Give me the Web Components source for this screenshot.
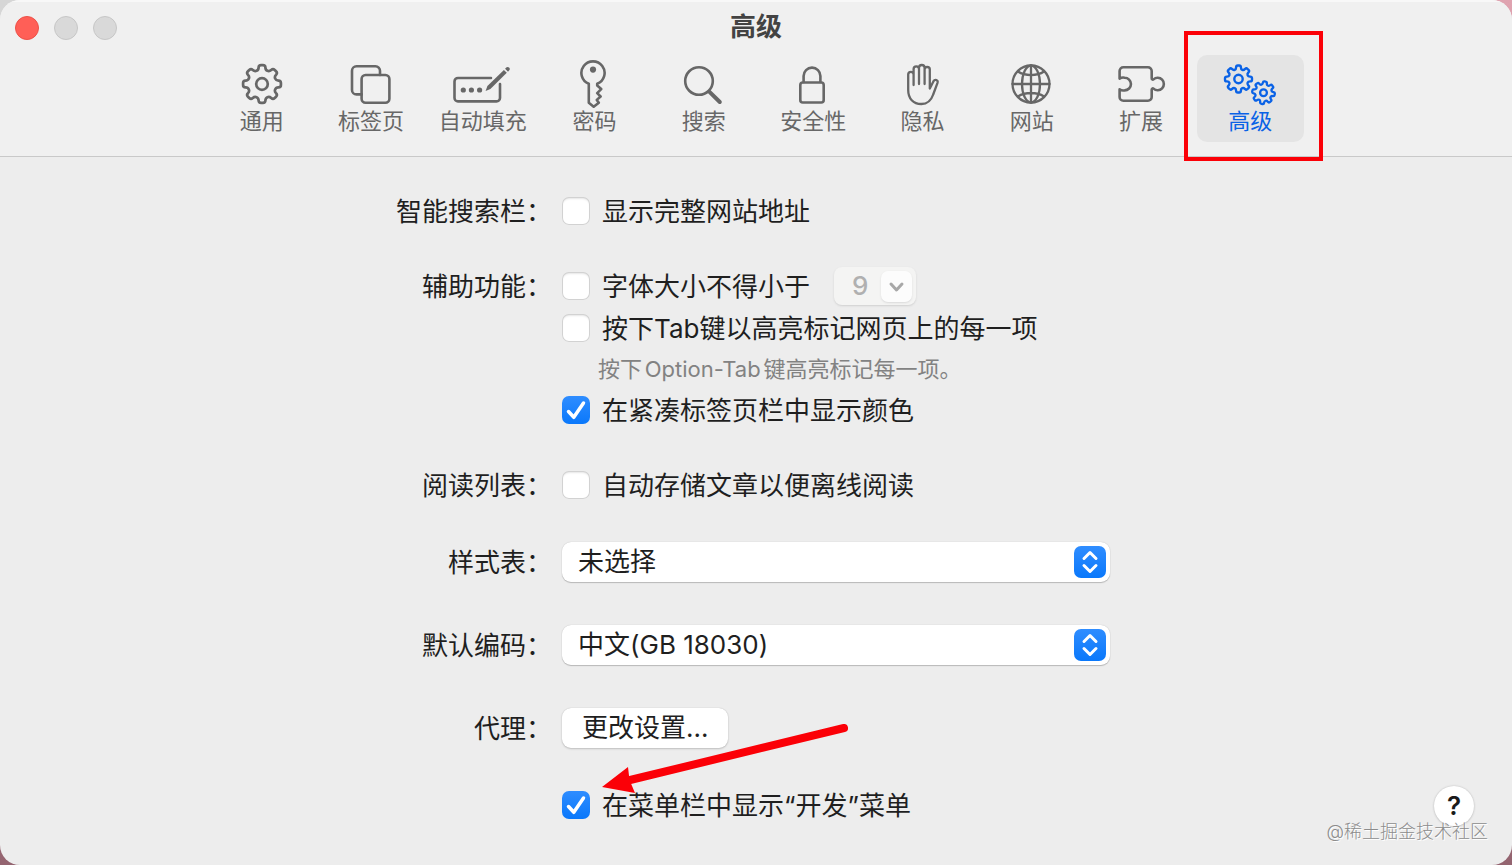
<!DOCTYPE html>
<html lang="zh-CN">
<head>
<meta charset="utf-8">
<title>高级</title>
<style>
  html { height: 100%; }
  body {
    margin: 0;
    min-height: 100vh;
    display: flex;
    background: linear-gradient(100deg, #d6d6d6 0 50%, transparent 50%) top / 100% 50% no-repeat,
                linear-gradient(#dfa3b0, #946470);
    font-family: Inter, "Noto Sans CJK SC", sans-serif;
    font-size: 26px;
    line-height: 40px;
    color: #1f1f1f;
  }
</style>
</head>
<body>
<prefs-window></prefs-window>

<script>
/* Closed path through the points, each corner rounded by r. */
function roundedPath(pts, r) {
  let d = '';
  pts.forEach((p, i) => {
    const a = pts[(i + pts.length - 1) % pts.length], b = pts[(i + 1) % pts.length];
    const toward = q => {
      const l = Math.hypot(q[0] - p[0], q[1] - p[1]), k = Math.min(r, l / 2) / l;
      return [p[0] + (q[0] - p[0]) * k, p[1] + (q[1] - p[1]) * k].map(n => n.toFixed(2)).join(' ');
    };
    d += `${i ? 'L' : 'M'}${toward(a)}Q${p[0].toFixed(2)} ${p[1].toFixed(2)} ${toward(b)}`;
  });
  return d + 'Z';
}

/* Eight-toothed gear with a round hole. */
function gear(cx, cy, outer, root, hole, width, turn = 0) {
  const pts = [];
  for (let i = 0; i < 8; i++) {
    for (const [off, rad] of [[-14, root], [-10, outer], [10, outer], [14, root]]) {
      const t = (i * 45 + off + turn - 90) * Math.PI / 180;
      pts.push([cx + rad * Math.cos(t), cy + rad * Math.sin(t)]);
    }
  }
  return `<g stroke-width="${width}"><path d="${roundedPath(pts, outer / 8)}"/><circle cx="${cx}" cy="${cy}" r="${hole}"/></g>`;
}

const ICONS = {
  general: gear(32, 24, 19.2, 14.4, 5.8, 2.7),
  tabs: '<rect x="22.6" y="15" width="27.8" height="27.8" rx="4"/><path d="M22.6 34.4H17.5a4.5 4.5 0 0 1-4.5-4.5V10.8a4.5 4.5 0 0 1 4.5-4.5H36.5a4.5 4.5 0 0 1 4.5 4.5V15"/>',
  autofill: '<g transform="translate(-2 0)"><path d="M42 18H9a3.5 3.5 0 0 0-3.5 3.5v16.4A3.5 3.5 0 0 0 9 41.4h38.5a3.5 3.5 0 0 0 3.5-3.5V24"/><g fill="currentColor" stroke="none"><circle cx="14.3" cy="30" r="2.6"/><circle cx="22.4" cy="30" r="2.6"/><circle cx="30.6" cy="30" r="2.6"/><path d="M36.6 31l1.8-5L54.9 9.9l2.9 2.9L41.4 29z"/><path d="M56.1 8.8l1.1-1.2a2 2 0 0 1 2.9 2.9L59 11.7z"/></g></g>',
  key: '<g transform="translate(-1 0)"><path d="M26.8 23.8a11.6 11.6 0 1 1 8.4 0v1.8l4 3.5-4 4 3.4 3.4-3.8 3.4 2 2.8-5.1 4-4.9-4z"/><circle cx="31" cy="9.6" r="3.1" fill="currentColor" stroke="none"/></g>',
  search: '<circle cx="27" cy="21" r="13.8"/><path d="M37.5 31.8L47.8 42" stroke-width="4"/>',
  lock: '<rect x="19.3" y="22.5" width="23.4" height="20" rx="2.5"/><path d="M22.6 22V16a8.4 8.4 0 0 1 16.8 0v6"/>',
  hand: '<path stroke-width="2.3" d="M23.6 25V14.5a2.7 2.7 0 0 0-5.4 0V30c0 8.500 5 14 13.200 14 6 0 9.600-3 11.800-9.500L47.500 22.800c.9-3-2.600-4-4-1.600L39.800 28.500V9.600a2.600 2.600 0 0 0-5.200 0V24M23.600 14.500V9a2.700 2.700 0 0 1 5.400 0V24M29 9V7.800a2.800 2.800 0 0 1 5.600 0V12"/>',
  globe: '<g stroke-width="2.3" transform="translate(-1 0)"><circle cx="32" cy="24" r="18.500"/><path d="M13.500 24h37M32 5.500v37M19 11.500c7 4.700 19 4.700 26 0M19 36.500c7-4.700 19-4.700 26 0"/><ellipse cx="32" cy="24" rx="9" ry="18.500"/></g>',
  puzzle: '<path d="M10.600 18.600V11a3.800 3.800 0 0 1 3.800-3.800h24.500a3.800 3.800 0 0 1 3.800 3.800v7.300c0 1.200.9 1.600 1.800 1.100a6.200 6.200 0 1 1 0 9.200c-.9-.5-1.800-.1-1.800 1.100V37a3.800 3.800 0 0 1-3.800 3.800H14.400a3.800 3.800 0 0 1-3.800-3.800v-7.600c1.600 1.100 3.500 1.300 5 1a6.300 6.300 0 1 0 0-12.700c-1.500-.3-3.400-.1-5 .9z"/>',
  advanced: gear(20.5, 19, 13.7, 10, 4.2, 2.4) + gear(45.5, 32.700, 11.500, 8.400, 3.400, 2.300, 8)
};

class PrefsTab extends HTMLElement {
  connectedCallback() {
    const selected = this.hasAttribute('selected');
    this.attachShadow({ mode: 'open' }).innerHTML = `
      <style>
        :host { display: block; flex: 1 1 107px; position: relative; }
        :host([wide]) { flex-basis: 112px; }
        button {
          width: 100%; height: 87px; padding: 5px 0 8px; border: 0; border-radius: 10px;
          background: none; color: #676767; font: inherit; font-size: 22px; line-height: 26px;
          display: flex; flex-direction: column; align-items: center;
        }
        button[aria-selected="true"] { background: #e4e4e4; color: #0a62e6; }
        svg { width: 64px; height: 48px; fill: none; stroke: currentColor; stroke-width: 2.6; stroke-linecap: round; stroke-linejoin: round; }
        span { white-space: nowrap; }
      </style>
      <button type="button" role="tab" aria-selected="${selected}">
        <svg viewBox="0 0 64 48" aria-hidden="true">${ICONS[this.getAttribute('icon')]}</svg>
        <span><slot></slot></span>
      </button>
      <slot name="mark"></slot>`;
  }
}

class MarkFrame extends HTMLElement {
  connectedCallback() {
    this.attachShadow({ mode: 'open' }).innerHTML = `
      <style>
        :host { position: absolute; inset: -24px -19px -19px -13px; border: 4px solid #fb0007; pointer-events: none; z-index: 2; }
      </style>`;
  }
}

class MarkArrow extends HTMLElement {
  connectedCallback() {
    this.attachShadow({ mode: 'open' }).innerHTML = `
      <style>
        :host { position: absolute; left: 40px; top: -65px; pointer-events: none; }
        svg { display: block; width: 248px; height: 76px; }
      </style>
      <svg viewBox="0 0 248 76" aria-hidden="true">
        <path d="M242 8L24 61" stroke="#fb0007" stroke-width="8" stroke-linecap="round"/>
        <path d="M0 67L26 47L27.500 60L33 73z" fill="#fb0007"/>
      </svg>`;
  }
}

/* Row frame: right-aligned caption beside a column of controls. */
const ROW_STYLE = `
  :host { display: grid; grid-template-columns: 156px minmax(0, 548px); column-gap: 10px; justify-content: center; padding-right: 6px; }
  .caption { text-align: right; white-space: nowrap; height: 40px; line-height: 42px; }`;

class PrefsGroup extends HTMLElement {
  connectedCallback() {
    this.attachShadow({ mode: 'open' }).innerHTML = `
      <style>
        ${ROW_STYLE}
        .items { display: flex; flex-direction: column; gap: 2px; align-items: flex-start; position: relative; }
      </style>
      <div class="caption" id="cap">${this.getAttribute('caption') || ''}</div>
      <div class="items" role="group" aria-labelledby="cap"><slot></slot></div>`;
  }
}

class PrefsCheck extends HTMLElement {
  connectedCallback() {
    this.attachShadow({ mode: 'open' }).innerHTML = `
      <style>
        :host { display: flex; align-items: center; height: 40px; }
        label { display: flex; align-items: center; gap: 12px; white-space: nowrap; }
        .box { display: grid; }
        .box > * { grid-area: 1 / 1; }
        .text { padding-top: 2px; }
        input {
          appearance: none; margin: 0; width: 28px; height: 28px; border-radius: 7px; background: #fff;
          box-shadow: inset 0 0 0 1px #d2d2d2, inset 0 2px 2px #e6e6e6;
        }
        input:checked { background: linear-gradient(#2f8dff, #0a78fb); box-shadow: none; }
        svg { width: 28px; height: 28px; fill: none; stroke: none; stroke-width: 3.500; stroke-linecap: round; stroke-linejoin: round; pointer-events: none; }
        input:checked + svg { stroke: #fff; }
      </style>
      <label>
        <span class="box">
          <input type="checkbox" ${this.hasAttribute('checked') ? 'checked' : ''}>
          <svg viewBox="0 0 28 28" aria-hidden="true"><path d="M6.500 15.500L11.800 21.300L21.500 7"/></svg>
        </span>
        <span class="text"><slot></slot></span>
      </label>
      <slot name="after"></slot>`;
  }
}

class PrefsSize extends HTMLElement {
  connectedCallback() {
    this.attachShadow({ mode: 'open' }).innerHTML = `
      <style>
        :host { display: grid; margin-left: 24px; width: 82px; height: 38px; }
        select, svg { grid-area: 1 / 1; }
        select {
          appearance: none; box-sizing: border-box; height: 38px; border: 0; margin: 0; padding: 0 0 0 18px; border-radius: 8px;
          font: inherit; line-height: 38px; font-weight: 500;
          background: #f4f4f3; color: #b0b0b0; opacity: 1; box-shadow: 0 1px 2px #d0d0d0;
        }
        svg {
          justify-self: end; align-self: center; width: 31px; height: 31px; margin-right: 4px; border-radius: 7px;
          background: #fcfcfc; box-shadow: 0 1px 2px #dadada; fill: none; stroke: #a8a8a8; stroke-width: 3;
          stroke-linecap: round; stroke-linejoin: round; pointer-events: none;
        }
      </style>
      <select disabled aria-label="字体大小"><option>9</option></select>
      <svg viewBox="0 0 31 31" aria-hidden="true"><path d="M10 13l5.500 6 5.500-6"/></svg>`;
  }
}

class PrefsNote extends HTMLElement {
  connectedCallback() {
    this.attachShadow({ mode: 'open' }).innerHTML = `
      <style>:host { display: block; padding-left: 36px; font-size: 22px; line-height: 38px; color: #828282; white-space: nowrap; text-autospace: normal; }</style>
      <slot></slot>`;
  }
}

class PrefsPopup extends HTMLElement {
  connectedCallback() {
    this.attachShadow({ mode: 'open' }).innerHTML = `
      <style>
        ${ROW_STYLE}
        .field { display: grid; height: 40px; }
        select, svg { grid-area: 1 / 1; }
        select {
          appearance: none; box-sizing: border-box; width: 100%; height: 40px; margin: 0; border: 0; padding: 0 44px 0 16px; border-radius: 9px;
          font: inherit; color: inherit; background: #fff; box-shadow: 0 0 1px #b4b4b4, 0 1px 1px #b8b8b8;
        }
        svg {
          justify-self: end; align-self: center; width: 32px; height: 32px; margin-right: 4px; border-radius: 7px;
          background: linear-gradient(#2f8dff, #0a78fb); fill: none; stroke: #fff; stroke-width: 3;
          stroke-linecap: round; stroke-linejoin: round; pointer-events: none;
        }
      </style>
      <label class="caption" for="s">${this.getAttribute('caption')}</label>
      <div class="field">
        <select id="s"><option>${this.getAttribute('value')}</option></select>
        <svg viewBox="0 0 32 32" aria-hidden="true"><path d="M10 12.500l6-6 6 6M10 19.500l6 6 6-6"/></svg>
      </div>`;
  }
}

class PrefsButton extends HTMLElement {
  connectedCallback() {
    this.attachShadow({ mode: 'open' }).innerHTML = `
      <style>
        :host { display: block; }
        button {
          height: 40px; padding: 0 20px; border: 0; border-radius: 9px; font: inherit; color: inherit;
          background: #fff; box-shadow: 0 0 1px #b4b4b4, 0 1px 2px #c0c0c0; display: block;
        }
      </style>
      <button type="button"><slot></slot></button>`;
  }
}

class PrefsHelp extends HTMLElement {
  connectedCallback() {
    this.attachShadow({ mode: 'open' }).innerHTML = `
      <style>
        :host { display: block; }
        button {
          display: grid; place-items: center; width: 40px; height: 40px; padding: 0; border: 0; border-radius: 50%;
          background: #fff; color: #1a1a1a; font: inherit; font-weight: 600; box-shadow: 0 0 2px #bcbcbc, 0 1px 2px #d0d0d0;
        }
      </style>
      <button type="button" aria-label="帮助">?</button>`;
  }
}

class PrefsWindow extends HTMLElement {
  connectedCallback() {
    this.attachShadow({ mode: 'open' }).innerHTML = `
      <style>
        :host { display: flex; flex-direction: column; flex: 1; min-width: 0; position: relative; background: #ededed; border-radius: 20px; overflow: hidden; }
        header { background: #f0f0f0; border-bottom: 1px solid #c9c9c9; padding-bottom: 14px; box-shadow: inset 0 2px 0 #f8f8f8; }
        .title { display: grid; grid-template-columns: 1fr auto 1fr; align-items: center; height: 53px; padding: 0 15px 2px; }
        .lights { display: flex; gap: 15px; padding-top: 2px; }
        .lights i { width: 24px; height: 24px; box-sizing: border-box; border-radius: 50%; background: #d9d9d9; border: 1px solid #c6c6c6; }
        .lights i.close { background: #ff5f57; border-color: #ec5148; }
        h1 { margin: 0; font-size: 26px; line-height: 52px; font-weight: 700; color: #434343; }
        nav { display: flex; gap: 2px; max-width: 1096px; margin: 0 auto; }
        main { flex: 1; display: grid; }
        form, prefs-help { grid-area: 1 / 1; }
        form { padding: 34px 0 36px; display: flex; flex-direction: column; gap: 37px; }
        .options, .fields { display: flex; flex-direction: column; }
        .options { gap: 35px; }
        .fields { gap: 43px; }
        prefs-help { align-self: end; justify-self: end; margin: 0 38px 39px 0; }
        .watermark { position: absolute; right: 24px; bottom: 19px; font-size: 18px; line-height: 28px; font-weight: 300; color: #8c8c8c; text-shadow: 1px 1px 0 #fff; pointer-events: none; }
      </style>
      <header>
        <div class="title">
          <div class="lights"><i class="close"></i><i></i><i></i></div>
          <h1>高级</h1>
        </div>
        <nav role="tablist">
          <prefs-tab icon="general">通用</prefs-tab>
          <prefs-tab icon="tabs">标签页</prefs-tab>
          <prefs-tab icon="autofill" wide>自动填充</prefs-tab>
          <prefs-tab icon="key">密码</prefs-tab>
          <prefs-tab icon="search">搜索</prefs-tab>
          <prefs-tab icon="lock">安全性</prefs-tab>
          <prefs-tab icon="hand">隐私</prefs-tab>
          <prefs-tab icon="globe">网站</prefs-tab>
          <prefs-tab icon="puzzle">扩展</prefs-tab>
          <prefs-tab icon="advanced" selected>高级<mark-frame slot="mark"></mark-frame></prefs-tab>
        </nav>
      </header>
      <main>
        <form>
          <div class="options">
            <prefs-group caption="智能搜索栏："><prefs-check>显示完整网站地址</prefs-check></prefs-group>
            <prefs-group caption="辅助功能：">
              <prefs-check>字体大小不得小于<prefs-size slot="after"></prefs-size></prefs-check>
              <prefs-check>按下Tab键以高亮标记网页上的每一项</prefs-check>
              <prefs-note>按下Option-Tab键高亮标记每一项。</prefs-note>
              <prefs-check checked>在紧凑标签页栏中显示颜色</prefs-check>
            </prefs-group>
            <prefs-group caption="阅读列表："><prefs-check>自动存储文章以便离线阅读</prefs-check></prefs-group>
          </div>
          <div class="fields">
            <prefs-popup caption="样式表：" value="未选择"></prefs-popup>
            <prefs-popup caption="默认编码：" value="中文(GB 18030)"></prefs-popup>
            <prefs-group caption="代理："><prefs-button>更改设置...</prefs-button></prefs-group>
          </div>
          <prefs-group>
            <prefs-check checked>在菜单栏中显示“开发”菜单</prefs-check>
            <mark-arrow></mark-arrow>
          </prefs-group>
        </form>
        <prefs-help></prefs-help>
      </main>
      <div class="watermark">@稀土掘金技术社区</div>`;
  }
}

customElements.define('mark-frame', MarkFrame);
customElements.define('mark-arrow', MarkArrow);
customElements.define('prefs-tab', PrefsTab);
customElements.define('prefs-group', PrefsGroup);
customElements.define('prefs-size', PrefsSize);
customElements.define('prefs-check', PrefsCheck);
customElements.define('prefs-note', PrefsNote);
customElements.define('prefs-popup', PrefsPopup);
customElements.define('prefs-button', PrefsButton);
customElements.define('prefs-help', PrefsHelp);
customElements.define('prefs-window', PrefsWindow);
</script>
</body>
</html>
